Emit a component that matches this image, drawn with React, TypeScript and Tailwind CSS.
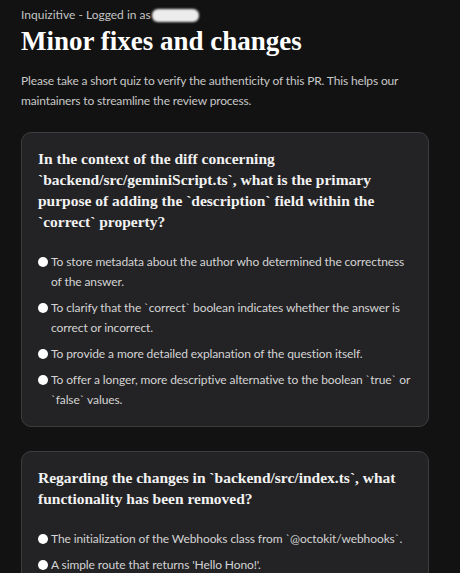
import React from 'react';

type Question = {
  text: string;
  options: string[];
};

const questions: Question[] = [
  {
    text: 'In the context of the diff concerning `backend/src/geminiScript.ts`, what is the primary purpose of adding the `description` field within the `correct` property?',
    options: [
      'To store metadata about the author who determined the correctness of the answer.',
      'To clarify that the `correct` boolean indicates whether the answer is correct or incorrect.',
      'To provide a more detailed explanation of the question itself.',
      'To offer a longer, more descriptive alternative to the boolean `true` or `false` values.',
    ],
  },
  {
    text: 'Regarding the changes in `backend/src/index.ts`, what functionality has been removed?',
    options: [
      'The initialization of the Webhooks class from `@octokit/webhooks`.',
      "A simple route that returns 'Hello Hono!'.",
    ],
  },
];

const sans = { fontFamily: 'Lato, "Noto Sans", sans-serif' };

const QuestionCard: React.FC<{ q: Question }> = ({ q }) => (
  <div className="rounded-[10px] border border-[#3d3d40] bg-[#232325] px-4 pt-[15px] pb-4">
    <h2 className="font-['Liberation_Serif',serif] text-[15.5px] font-bold leading-[21px] text-[#f2f2f2]">
      {q.text}
    </h2>
    <ul className="mt-5 flex flex-col gap-[6px]">
      {q.options.map((opt) => (
        <li key={opt} className="flex items-start gap-[3px]">
          <span className="mt-[5px] h-[10px] w-[10px] shrink-0 rounded-full bg-white" />
          <span className="text-[12px] leading-[20px] tracking-[-0.1px] text-[#d4d4d4]" style={sans}>
            {opt}
          </span>
        </li>
      ))}
    </ul>
  </div>
);

export default function App() {
  return (
    <div className="h-screen overflow-hidden bg-[#121212] px-[21px] pt-[6px]">
      <div className="flex items-center text-[12px] leading-[18px] text-[#c4c4c4]" style={sans}>
        <span>Inquizitive - Logged in as</span>
        <span className="ml-[1px] inline-block h-[13px] w-[47px] rounded-[6px] bg-[#ececec] blur-[1px]" />
      </div>
      <h1 className="font-['Liberation_Serif',serif] text-[27px] font-bold leading-[34px] text-white">
        Minor fixes and changes
      </h1>
      <p className="mt-[13px] text-[12px] leading-[20px] tracking-[-0.15px] text-[#c8c8c8]" style={sans}>
        Please take a short quiz to verify the authenticity of this PR. This helps our maintainers to streamline the
        review process.
      </p>
      <div className="mt-[21px] flex w-[408px] flex-col gap-6">
        {questions.map((q) => (
          <QuestionCard key={q.text} q={q} />
        ))}
      </div>
    </div>
  );
}
